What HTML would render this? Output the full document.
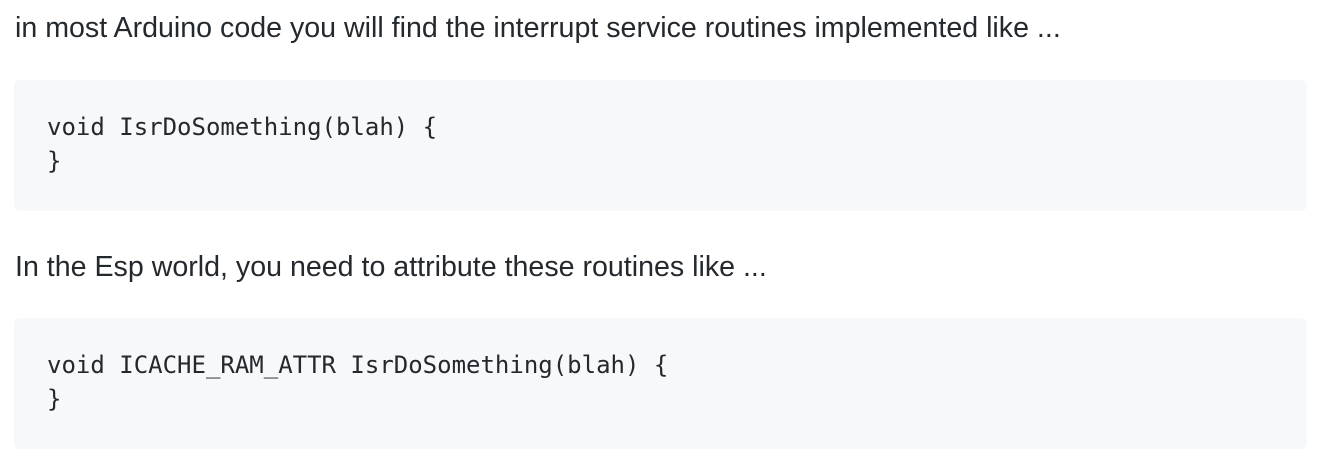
<!DOCTYPE html>
<html><head><style>
body{margin:0;background:#fff;width:1328px;height:466px;overflow:hidden;color:#24292e;}
.p{position:absolute;left:15px;font-family:"Liberation Sans",Arial,sans-serif;font-size:28.6px;line-height:34px;white-space:nowrap;}
.pre{position:absolute;left:14px;width:1293px;height:131px;background:#f6f8fa;border-radius:6px;}
.code{position:absolute;left:33px;top:30px;font-family:"DejaVu Sans Mono",monospace;font-size:24px;line-height:34px;white-space:pre;color:#24292e;}
</style></head><body>
<div class="p" style="top:11px">in most Arduino code you will find the interrupt service routines implemented like ...</div>
<div class="pre" style="top:80px"><div class="code">void IsrDoSomething(blah) {
}</div></div>
<div class="p" style="top:250px">In the Esp world, you need to attribute these routines like ...</div>
<div class="pre" style="top:318px"><div class="code">void ICACHE_RAM_ATTR IsrDoSomething(blah) {
}</div></div>
</body></html>
